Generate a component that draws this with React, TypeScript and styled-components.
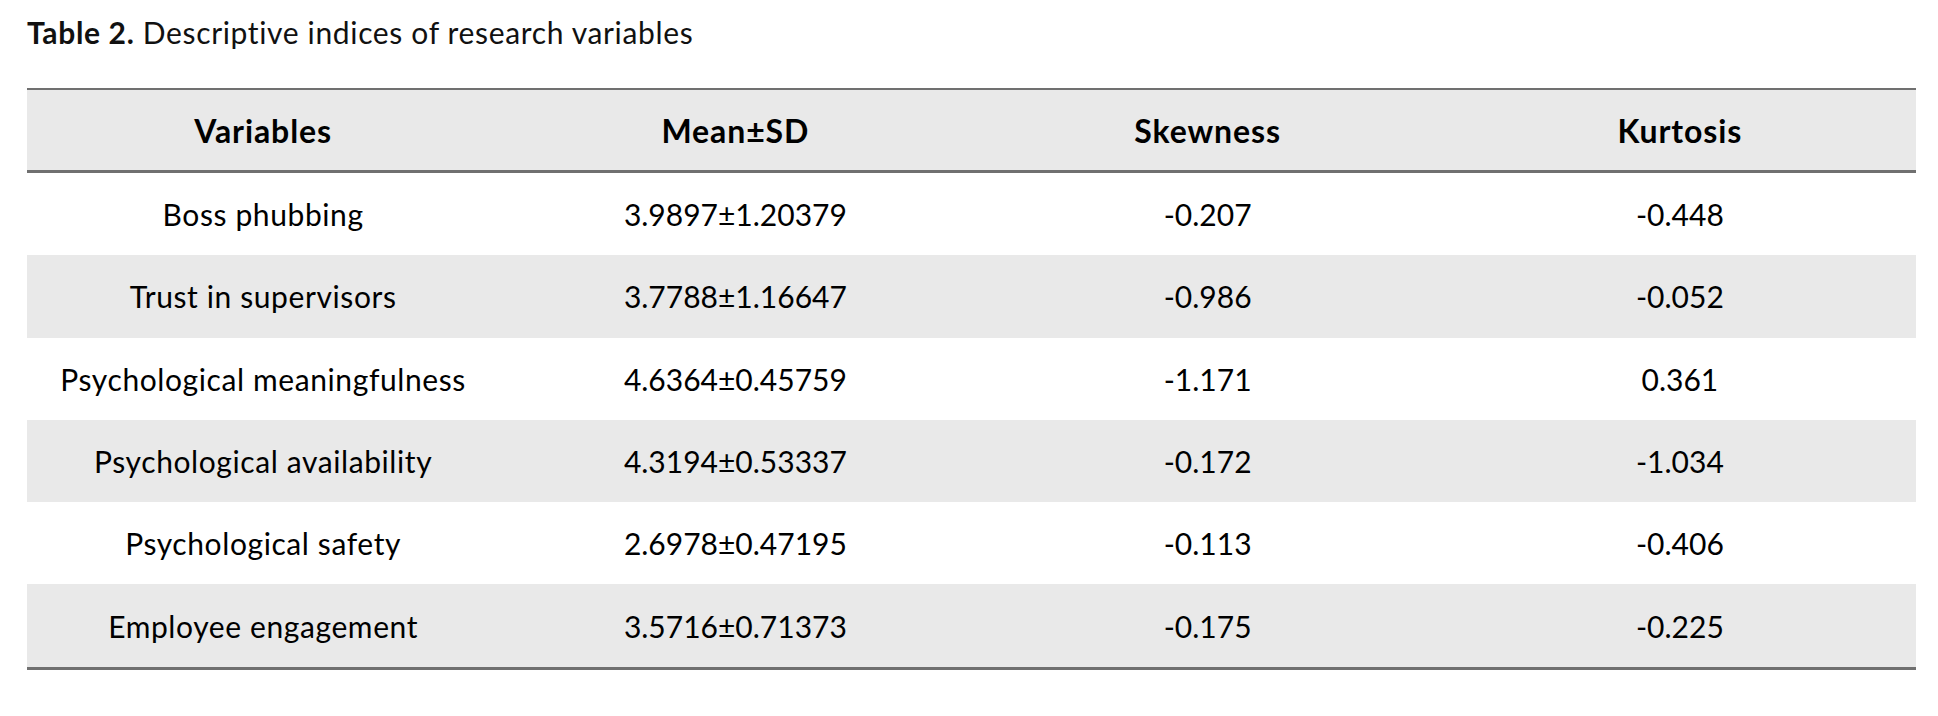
import React from "react";
import styled, { createGlobalStyle } from "styled-components";

const GlobalStyle = createGlobalStyle`
  html, body {
    margin: 0;
    padding: 0;
    background: #ffffff;
  }
  body {
    font-family: Lato, "Open Sans", sans-serif;
    color: #000;
  }
`;

const Page = styled.div`
  padding: 14px 0 0 27px;
  width: 1889px;
`;

const Caption = styled.p`
  margin: 0 0 38px 0;
  font-size: 30px;
  line-height: 36px;
  letter-spacing: 0.65px;
  font-weight: 400;
  color: #111;
`;

const CaptionLabel = styled.strong`
  font-weight: 700;
`;

const Table = styled.table`
  width: 1889px;
  border-collapse: collapse;
  table-layout: fixed;
`;

const HeadCell = styled.th`
  height: 80px;
  padding: 0;
  background: #e9e9e9;
  border-top: 2px solid #707070;
  border-bottom: 3px solid #707070;
  font-size: 32px;
  letter-spacing: 0.9px;
  font-weight: 700;
  text-align: center;
  vertical-align: middle;
`;

const Row = styled.tr<{ $shaded: boolean }>`
  background: ${(p) => (p.$shaded ? "#e9e9e9" : "#ffffff")};

  &:last-child td {
    border-bottom: 3px solid #707070;
  }
`;

const Cell = styled.td<{ $label?: boolean }>`
  height: 82.3px;
  padding: 0;
  font-size: 30px;
  letter-spacing: ${(p) => (p.$label ? "0.6px" : "0")};
  text-align: center;
  vertical-align: middle;
  font-weight: 400;
`;

const columns = ["Variables", "Mean±SD", "Skewness", "Kurtosis"];

const rows: [string, string, string, string][] = [
  ["Boss phubbing", "3.9897±1.20379", "-0.207", "-0.448"],
  ["Trust in supervisors", "3.7788±1.16647", "-0.986", "-0.052"],
  ["Psychological meaningfulness", "4.6364±0.45759", "-1.171", "0.361"],
  ["Psychological availability", "4.3194±0.53337", "-0.172", "-1.034"],
  ["Psychological safety", "2.6978±0.47195", "-0.113", "-0.406"],
  ["Employee engagement", "3.5716±0.71373", "-0.175", "-0.225"],
];

const App = () => {
  return (
    <>
      <GlobalStyle />
      <Page>
        <Caption>
          <CaptionLabel>Table 2.</CaptionLabel> Descriptive indices of research
          variables
        </Caption>
        <Table>
          <thead>
            <tr>
              {columns.map((c) => (
                <HeadCell key={c}>{c}</HeadCell>
              ))}
            </tr>
          </thead>
          <tbody>
            {rows.map((r, i) => (
              <Row key={r[0]} $shaded={i % 2 === 1}>
                {r.map((v, j) => (
                  <Cell key={j} $label={j === 0}>
                    {v}
                  </Cell>
                ))}
              </Row>
            ))}
          </tbody>
        </Table>
      </Page>
    </>
  );
};

export default App;
